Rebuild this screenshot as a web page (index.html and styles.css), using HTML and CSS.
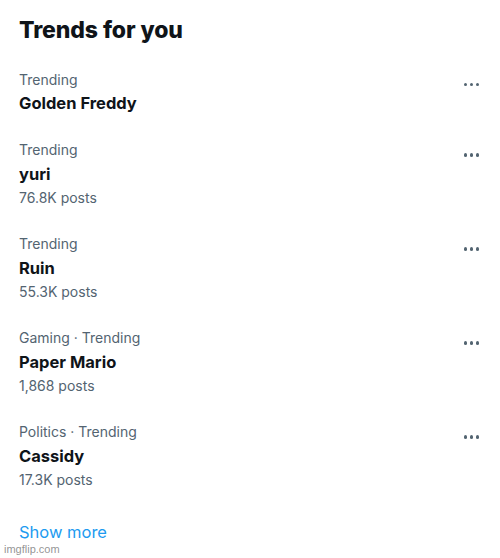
FILE: index.html
```html
<!DOCTYPE html>
<html>
<head>
<meta charset="utf-8">
<link rel="stylesheet" href="styles.css">
</head>
<body>
<div class="panel">
  <h2 class="title">Trends for you</h2>
  <div class="trend">
    <div class="info">
      <div class="meta">Trending</div>
      <div class="name">Golden Freddy</div>
    </div>
    <div class="more"><span></span><span></span><span></span></div>
  </div>
  <div class="trend">
    <div class="info">
      <div class="meta">Trending</div>
      <div class="name">yuri</div>
      <div class="meta">76.8K posts</div>
    </div>
    <div class="more"><span></span><span></span><span></span></div>
  </div>
  <div class="trend">
    <div class="info">
      <div class="meta">Trending</div>
      <div class="name">Ruin</div>
      <div class="meta">55.3K posts</div>
    </div>
    <div class="more"><span></span><span></span><span></span></div>
  </div>
  <div class="trend">
    <div class="info">
      <div class="meta">Gaming · Trending</div>
      <div class="name">Paper Mario</div>
      <div class="meta">1,868 posts</div>
    </div>
    <div class="more"><span></span><span></span><span></span></div>
  </div>
  <div class="trend">
    <div class="info">
      <div class="meta">Politics · Trending</div>
      <div class="name">Cassidy</div>
      <div class="meta">17.3K posts</div>
    </div>
    <div class="more"><span></span><span></span><span></span></div>
  </div>
  <div class="show-more">Show more</div>
</div>
<div class="watermark">imgflip.com</div>
</body>
</html>
```
FILE: styles.css
```css
html, body {
  margin: 0;
  padding: 0;
  background: #ffffff;
}
body {
  font-family: Inter, "Liberation Sans", sans-serif;
  color: #0f1419;
  width: 500px;
  height: 558px;
  position: relative;
  overflow: hidden;
}
.panel {
  padding: 16px 21px 0 19px;
}
.title {
  margin: 0;
  font-size: 23px;
  font-weight: 800;
  line-height: 28px;
  letter-spacing: -0.1px;
}
.trend {
  display: flex;
  justify-content: space-between;
  align-items: flex-start;
  padding: 11.5px 0;
}
.trend:first-of-type {
  margin-top: 12px;
}
.info {
  display: flex;
  flex-direction: column;
}
.meta {
  font-size: 14px;
  line-height: 23.5px;
  color: #536471;
}
.name {
  font-size: 16.5px;
  line-height: 24px;
  font-weight: 700;
}
.more {
  display: flex;
  gap: 2.5px;
  margin-top: 15px;
}
.more span {
  width: 3.5px;
  height: 3.5px;
  border-radius: 50%;
  background: #536471;
}
.show-more {
  padding-top: 17.5px;
  font-size: 16.5px;
  line-height: 24px;
  color: #1d9bf0;
}
.watermark {
  position: absolute;
  left: 4px;
  bottom: 3px;
  font-family: "Liberation Sans", Arial, sans-serif;
  font-size: 11px;
  color: rgba(120, 120, 120, 0.8);
}
```
